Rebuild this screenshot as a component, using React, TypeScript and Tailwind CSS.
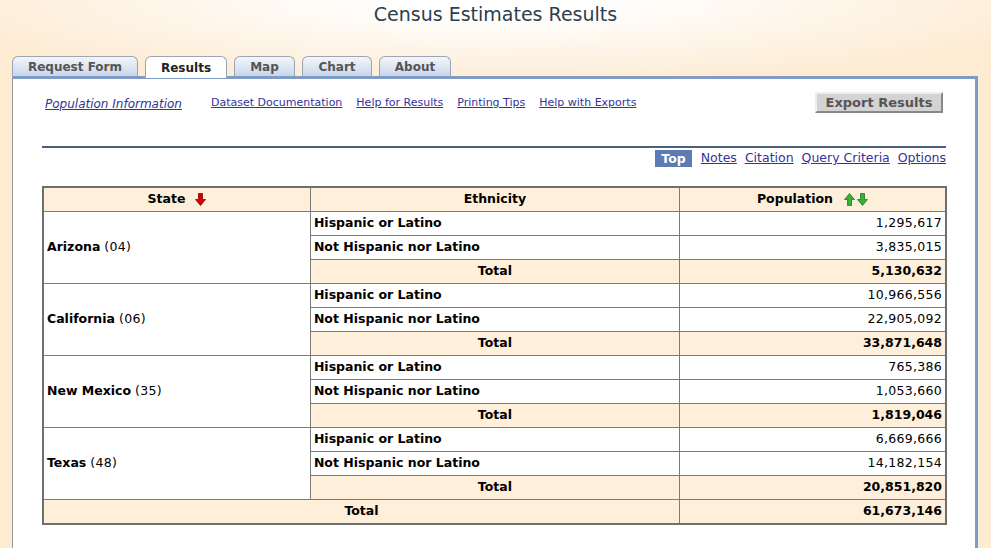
import React from "react";

type Row = { state: string; code: string; hisp: string; non: string; total: string };

const rows: Row[] = [
  { state: "Arizona", code: "04", hisp: "1,295,617", non: "3,835,015", total: "5,130,632" },
  { state: "California", code: "06", hisp: "10,966,556", non: "22,905,092", total: "33,871,648" },
  { state: "New Mexico", code: "35", hisp: "765,386", non: "1,053,660", total: "1,819,046" },
  { state: "Texas", code: "48", hisp: "6,669,666", non: "14,182,154", total: "20,851,820" },
];

const tabs = [
  { label: "Request Form", w: "w-[126px]" },
  { label: "Results", w: "w-[82px]", active: true },
  { label: "Map", w: "w-[61px]" },
  { label: "Chart", w: "w-[70px]" },
  { label: "About", w: "w-[72px]" },
];

const helpLinks = ["Dataset Documentation", "Help for Results", "Printing Tips", "Help with Exports"];

function ArrowDown({ color, dark }: { color: string; dark: string }) {
  return (
    <svg width="11" height="13" viewBox="0 0 11 13" className="inline-block">
      <path d="M3.5 0.5h4v6h3L5.5 12.5 0.5 6.5h3z" fill={color} stroke={dark} strokeWidth="0.8" />
    </svg>
  );
}

function ArrowUp({ color, dark }: { color: string; dark: string }) {
  return (
    <svg width="11" height="13" viewBox="0 0 11 13" className="inline-block">
      <path d="M3.5 12.5h4v-6h3L5.5 0.5 0.5 6.5h3z" fill={color} stroke={dark} strokeWidth="0.8" />
    </svg>
  );
}

const cell = "border border-[#7b7b7b] h-[24px] px-[3px] py-0";
const num = "tracking-[0.3px]";

export default function App() {
  return (
    <div
      className="h-[548px] overflow-hidden bg-[radial-gradient(ellipse_600px_88px_at_50%_0,#ffffff_15%,#fdebd2_100%)] text-[12.5px] text-black"
      style={{ fontFamily: '"DejaVu Sans", Verdana, sans-serif' }}
    >
      <h1 className="pt-[3px] h-[56px] text-center text-[19px] leading-[22px] text-[#2a3f4f]">
        Census Estimates Results
      </h1>

      <div className="ml-[12px] mr-[13px]">
        <div className="flex items-end gap-[7px] h-[20px] relative z-10">
          {tabs.map((t) =>
            t.active ? (
              <div
                key={t.label}
                className={`${t.w} h-[22px] mb-[-2px] rounded-t-[6px] border border-b-0 border-[#9aa6b8] bg-white text-center text-[12px] font-bold leading-[23px] text-[#222]`}
              >
                {t.label}
              </div>
            ) : (
              <div
                key={t.label}
                className={`${t.w} h-[20px] rounded-t-[6px] border border-b-0 border-[#9aa6b8] bg-[linear-gradient(to_bottom,#f3f6fa,#c9d6ea)] text-center text-[12px] font-bold leading-[21px] text-[#555]`}
              >
                {t.label}
              </div>
            )
          )}
        </div>

        <div className="h-[472px] border-t-[3px] border-r-[3px] border-l border-t-[#7f9bc6] border-r-[#7f9bc6] border-l-[#999] bg-white">
          <div className="flex items-center h-[44px] pl-[32px] pr-[32px] pt-[5px]">
            <a className="italic text-[#333399] underline text-[12px] mr-[29px]">Population Information</a>
            {helpLinks.map((l) => (
              <a key={l} className="text-[#333399] underline text-[11px] mr-[14px]">
                {l}
              </a>
            ))}
            <button className="ml-auto mb-[3px] w-[128px] h-[21px] bg-[#d3d3d3] border-2 border-t-[#eeeeee] border-l-[#eeeeee] border-b-[#888] border-r-[#888] text-[13px] font-bold text-[#555] leading-[17px]">
              Export Results
            </button>
          </div>

          <div className="mx-[29px] mt-[23px] border-t-2 border-[#4b607c]" />

          <div className="mx-[29px] mt-[1px] flex justify-end items-center gap-[8px] text-[12.5px]">
            <span className="bg-[#5b7bb2] text-white font-bold px-[6px] h-[17px] leading-[17px] mr-[1px]">Top</span>
            <a className="text-[#333399] underline">Notes</a>
            <a className="text-[#333399] underline">Citation</a>
            <a className="text-[#333399] underline">Query Criteria</a>
            <a className="text-[#333399] underline">Options</a>
          </div>

          <table className="ml-[29px] mt-[18px] w-[905px] border-collapse border-2 border-[#6f6f6f] text-[12.5px]">
            <colgroup>
              <col className="w-[268px]" />
              <col className="w-[370px]" />
              <col className="w-[267px]" />
            </colgroup>
            <thead>
              <tr className="bg-[#fdefd9] font-bold">
                <th className={`${cell} h-[25px] text-center`}>
                  <span className="inline-flex items-center gap-[10px]">
                    State <ArrowDown color="#d40000" dark="#8a0000" />
                  </span>
                </th>
                <th className={`${cell} h-[25px] text-center`}>Ethnicity</th>
                <th className={`${cell} h-[25px] text-center`}>
                  <span className="inline-flex items-center gap-[11px]">
                    Population
                    <span className="inline-flex gap-[2px]">
                      <ArrowUp color="#33b233" dark="#1b7a1b" />
                      <ArrowDown color="#33b233" dark="#1b7a1b" />
                    </span>
                  </span>
                </th>
              </tr>
            </thead>
            <tbody>
              {rows.map((r) => (
                <React.Fragment key={r.state}>
                  <tr>
                    <td rowSpan={3} className={`${cell} bg-white`}>
                      <b>{r.state}</b> <span className={num}>({r.code})</span>
                    </td>
                    <td className={`${cell} font-bold`}>Hispanic or Latino</td>
                    <td className={`${cell} ${num} text-right`}>{r.hisp}</td>
                  </tr>
                  <tr>
                    <td className={`${cell} font-bold`}>Not Hispanic nor Latino</td>
                    <td className={`${cell} ${num} text-right`}>{r.non}</td>
                  </tr>
                  <tr className="bg-[#fdefd9]">
                    <td className={`${cell} font-bold text-center`}>Total</td>
                    <td className={`${cell} font-bold text-right`}>{r.total}</td>
                  </tr>
                </React.Fragment>
              ))}
              <tr className="bg-[#fdefd9] font-bold">
                <td colSpan={2} className={`${cell} text-center`}>Total</td>
                <td className={`${cell} text-right`}>61,673,146</td>
              </tr>
            </tbody>
          </table>
        </div>
      </div>
    </div>
  );
}
